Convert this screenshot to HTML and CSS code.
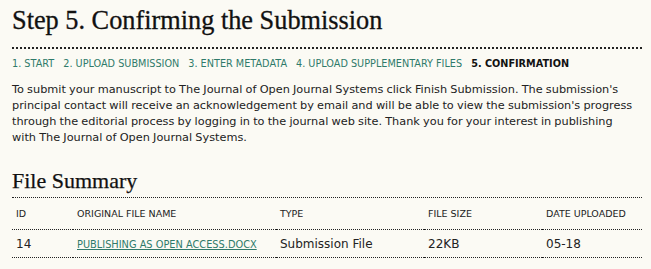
FILE: index.html
```html
<!DOCTYPE html>
<html>
<head>
<meta charset="utf-8">
<link rel="stylesheet" href="styles.css">
</head>
<body>
<div class="page">
  <h2 class="title">Step 5. Confirming the Submission</h2>
  <ul class="steps">
    <li><a href="#">1. Start</a></li>
    <li><a href="#">2. Upload Submission</a></li>
    <li><a href="#">3. Enter Metadata</a></li>
    <li><a href="#">4. Upload Supplementary Files</a></li>
    <li class="current">5. Confirmation</li>
  </ul>
  <p class="intro">To submit your manuscript to The Journal of Open Journal Systems click Finish Submission. The submission's principal contact will receive an acknowledgement by email and will be able to view the submission's progress through the editorial process by logging in to the journal web site. Thank you for your interest in publishing with The Journal of Open Journal Systems.</p>
  <h3 class="subtitle">File Summary</h3>
  <table class="files">
    <tr class="head">
      <td class="c-id">ID</td>
      <td class="c-name">Original file name</td>
      <td class="c-type">Type</td>
      <td class="c-size">File Size</td>
      <td class="c-date">Date uploaded</td>
    </tr>
    <tr class="row">
      <td>14</td>
      <td><a href="#" class="file">Publishing as Open Access.docx</a></td>
      <td>Submission File</td>
      <td>22KB</td>
      <td>05-18</td>
    </tr>
  </table>
</div>
</body>
</html>
```

FILE: styles.css
```css
html, body {
  margin: 0;
  padding: 0;
  background: #fbfaf4;
}
.page {
  width: 630px;
  padding: 0 0 0 12px;
  font-family: "DejaVu Sans", Verdana, sans-serif;
  color: #222;
}
.title {
  font-family: "Liberation Serif", Georgia, serif;
  font-weight: normal;
  font-size: 26.3px;
  line-height: 30px;
  margin: 0;
  padding: 6px 0 11px 0;
  border-bottom: 2px dotted #222;
  color: #111;
  -webkit-text-stroke: 0.3px #111;
}
.steps {
  list-style: none;
  margin: 0;
  padding: 9px 0 0 0;
  display: flex;
  gap: 9px;
  font-size: 9.7px;
  line-height: 12px;
  text-transform: uppercase;
}
.steps a {
  color: #2f7a6a;
  text-decoration: none;
}
.steps .current {
  font-weight: bold;
  color: #111;
}
.intro {
  max-width: 624px;
  font-size: 11.3px;
  word-spacing: -0.4px;
  line-height: 16px;
  margin: 12px 0 0 0;
}
.subtitle {
  font-family: "Liberation Serif", Georgia, serif;
  font-weight: normal;
  font-size: 22px;
  line-height: 24px;
  margin: 23px 0 0 0;
  padding: 0 0 4px 0;
  border-bottom: 1px dotted #222;
  color: #111;
  -webkit-text-stroke: 0.25px #111;
}
.files {
  width: 100%;
  border-collapse: collapse;
}
.files td {
  padding: 0 0 0 4px;
  border-bottom: 1px dotted #222;
}
.head td {
  font-size: 9.5px;
  text-transform: uppercase;
  height: 31px;
}
.row td {
  font-size: 12px;
  height: 27px;
}
.c-id { width: 57px; }
.c-name { width: 199px; }
.c-type { width: 144px; }
.c-size { width: 114px; }
.file {
  color: #2f7a6a;
  font-size: 9.8px;
  text-transform: uppercase;
}
```
